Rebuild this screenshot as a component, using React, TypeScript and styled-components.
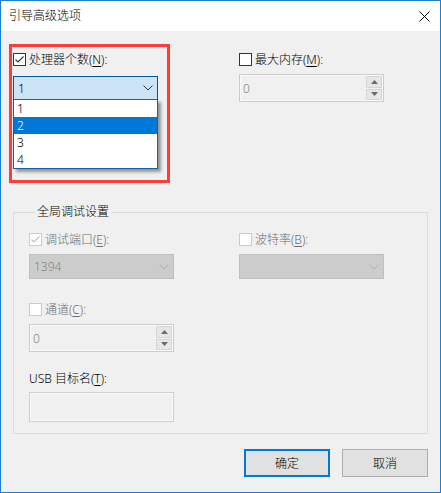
import React from "react";
import styled, { createGlobalStyle } from "styled-components";

const Global = createGlobalStyle`
  html, body { margin: 0; padding: 0; background: #f0f0f0; }
  body { font-family: "Noto Sans", "Noto Sans CJK SC", sans-serif; font-size: 12px; font-weight: 300; color: #000; }
  * { box-sizing: border-box; }
`;

const Window = styled.div`
  width: 441px;
  height: 493px;
  border: 1px solid #1c7fd6;
  background: #f0f0f0;
  display: flex;
  flex-direction: column;
`;

const TitleBar = styled.div`
  height: 30px;
  background: #fff;
  display: flex;
  align-items: center;
  justify-content: space-between;
  padding: 0 10px 0 8px;
  font-size: 12px;
  line-height: 16px;
`;

const Body = styled.div`
  flex: 1;
  display: flex;
  flex-direction: column;
  padding: 22px 12px 0 12px;
`;

const TwoCols = styled.div<{ $gap: number }>`
  display: grid;
  grid-template-columns: 145px 145px;
  column-gap: ${(p) => p.$gap}px;
  align-items: start;
`;

const Column = styled.div`
  position: relative;
  display: flex;
  flex-direction: column;
`;

const RedMark = styled.div`
  position: absolute;
  left: -4px;
  top: -9px;
  width: 161px;
  height: 139px;
  border: 3px solid #ff3b3b;
  pointer-events: none;
`;

const LabelRow = styled.div<{ $top?: number; $disabled?: boolean }>`
  height: 13px;
  margin-top: ${(p) => p.$top ?? 0}px;
  display: flex;
  align-items: center;
  gap: 3px;
  color: ${(p) => (p.$disabled ? "#6d6d6d" : "#000")};
  line-height: 13px;
  white-space: nowrap;
  u { text-decoration: underline; text-underline-offset: 2px; }
`;

const Box = styled.span<{ $disabled?: boolean }>`
  width: 13px;
  height: 13px;
  flex: none;
  border: 1px solid ${(p) => (p.$disabled ? "#cccccc" : "#333333")};
  background: #fff;
  display: flex;
  align-items: center;
  justify-content: center;
`;

const ComboBox = styled.div<{ $top: number; $h: number; $variant: "focus" | "disabled" }>`
  position: relative;
  margin-top: ${(p) => p.$top}px;
  height: ${(p) => p.$h}px;
  border: 1px solid ${(p) => (p.$variant === "focus" ? "#005499" : "#bfbfbf")};
  background: ${(p) => (p.$variant === "focus" ? "#cce4f7" : "#cccccc")};
  color: ${(p) => (p.$variant === "focus" ? "#000" : "#838383")};
  display: flex;
  align-items: center;
  justify-content: space-between;
  padding: 0 4px 0 4px;
  font-size: 12px;
`;

const DropList = styled.div`
  position: absolute;
  left: -1px;
  top: 100%;
  width: 145px;
  border: 1px solid #1a5fa5;
  background: #fff;
  box-shadow: 3px 3px 3px rgba(0, 0, 0, 0.38);
  z-index: 2;
`;

const DropItem = styled.div<{ $active?: boolean }>`
  height: 17px;
  line-height: 17px;
  padding-left: 3px;
  background: ${(p) => (p.$active ? "#0078d7" : "#fff")};
  color: ${(p) => (p.$active ? "#fff" : "#000")};
`;

const Spin = styled.div<{ $top: number }>`
  margin-top: ${(p) => p.$top}px;
  height: 28px;
  border: 1px solid #cccccc;
  background: #f0f0f0;
  box-shadow: inset 0 0 0 1px #fafafa;
  display: flex;
  align-items: stretch;
`;

const SpinValue = styled.div`
  flex: 1;
  display: flex;
  align-items: center;
  padding-left: 3px;
  color: #838383;
`;

const SpinButtons = styled.div`
  width: 17px;
  display: flex;
  flex-direction: column;
  gap: 1px;
  padding: 1px 1px 1px 0;
`;

const SpinBtn = styled.div`
  flex: 1;
  background: #e6e6e6;
  border: 1px solid #d6d6d6;
  display: flex;
  align-items: center;
  justify-content: center;
`;

const Group = styled.fieldset`
  margin: 102px 0 0 0;
  padding: 13px 15px 11px 15px;
  border: 1px solid #dcdcdc;
  min-width: 0;
`;

const Legend = styled.legend`
  margin-left: 6px;
  padding: 0 2px;
  font-size: 12px;
  line-height: 16px;
`;

const TextField = styled.div<{ $top: number }>`
  margin-top: ${(p) => p.$top}px;
  width: 145px;
  height: 30px;
  border: 1px solid #cfcfcf;
  background: #f0f0f0;
  box-shadow: inset 0 0 0 1px #fafafa;
`;

const ButtonRow = styled.div`
  margin-top: 15px;
  display: flex;
  justify-content: flex-end;
  gap: 12px;
`;

const Button = styled.div<{ $primary?: boolean }>`
  width: 86px;
  height: 28px;
  background: #e1e1e1;
  border: ${(p) => (p.$primary ? "2px solid #0078d7" : "1px solid #adadad")};
  display: flex;
  align-items: center;
  justify-content: center;
  font-size: 12px;
`;

const Check = ({ checked, disabled }: { checked?: boolean; disabled?: boolean }) => (
  <Box $disabled={disabled}>
    {checked && (
      <svg width="11" height="11" viewBox="0 0 11 11">
        <path d="M1.5 5.5 L4 8 L9.5 2.5" fill="none" stroke={disabled ? "#bcbcbc" : "#333"} strokeWidth="1.1" />
      </svg>
    )}
  </Box>
);

const Chevron = ({ color }: { color: string }) => (
  <svg width="10" height="6" viewBox="0 0 10 6">
    <path d="M0.5 0.5 L5 5 L9.5 0.5" fill="none" stroke={color} strokeWidth="1" />
  </svg>
);

const Arrow = ({ up }: { up?: boolean }) => (
  <svg width="7" height="4" viewBox="0 0 7 4">
    <path d={up ? "M0 4 L3.5 0 L7 4 Z" : "M0 0 L3.5 4 L7 0 Z"} fill="#6a6a6a" />
  </svg>
);

const SpinBox = ({ top, value }: { top: number; value: string }) => (
  <Spin $top={top}>
    <SpinValue>{value}</SpinValue>
    <SpinButtons>
      <SpinBtn><Arrow up /></SpinBtn>
      <SpinBtn><Arrow /></SpinBtn>
    </SpinButtons>
  </Spin>
);

export default function App() {
  return (
    <>
      <Global />
      <Window>
        <TitleBar>
          <span>引导高级选项</span>
          <svg width="11" height="11" viewBox="0 0 11 11">
            <path d="M0.5 0.5 L10.5 10.5 M10.5 0.5 L0.5 10.5" stroke="#000" strokeWidth="1" />
          </svg>
        </TitleBar>
        <Body>
          <TwoCols $gap={81}>
            <Column>
              <LabelRow>
                <Check checked />
                <span>处理器个数(<u>N</u>):</span>
              </LabelRow>
              <ComboBox $top={10} $h={24} $variant="focus">
                <span>1</span>
                <Chevron color="#333" />
                <DropList>
                  <DropItem>1</DropItem>
                  <DropItem $active>2</DropItem>
                  <DropItem>3</DropItem>
                  <DropItem>4</DropItem>
                </DropList>
              </ComboBox>
              <RedMark />
            </Column>
            <Column>
              <LabelRow>
                <Check />
                <span>最大内存(<u>M</u>):</span>
              </LabelRow>
              <SpinBox top={8} value="0" />
            </Column>
          </TwoCols>

          <Group>
            <Legend>全局调试设置</Legend>
            <TwoCols $gap={65}>
              <Column>
                <LabelRow $disabled>
                  <Check checked disabled />
                  <span>调试端口(<u>E</u>):</span>
                </LabelRow>
                <ComboBox $top={8} $h={25} $variant="disabled">
                  <span>1394</span>
                  <Chevron color="#b0b0b0" />
                </ComboBox>
                <LabelRow $top={24} $disabled>
                  <Check disabled />
                  <span>通道(<u>C</u>):</span>
                </LabelRow>
                <SpinBox top={8} value="0" />
                <LabelRow $top={20}>
                  <span>USB 目标名(<u>T</u>):</span>
                </LabelRow>
                <TextField $top={7} />
              </Column>
              <Column>
                <LabelRow $disabled>
                  <Check disabled />
                  <span>波特率(<u>B</u>):</span>
                </LabelRow>
                <ComboBox $top={8} $h={25} $variant="disabled">
                  <span />
                  <Chevron color="#b0b0b0" />
                </ComboBox>
              </Column>
            </TwoCols>
          </Group>

          <ButtonRow>
            <Button $primary>确定</Button>
            <Button>取消</Button>
          </ButtonRow>
        </Body>
      </Window>
    </>
  );
}
